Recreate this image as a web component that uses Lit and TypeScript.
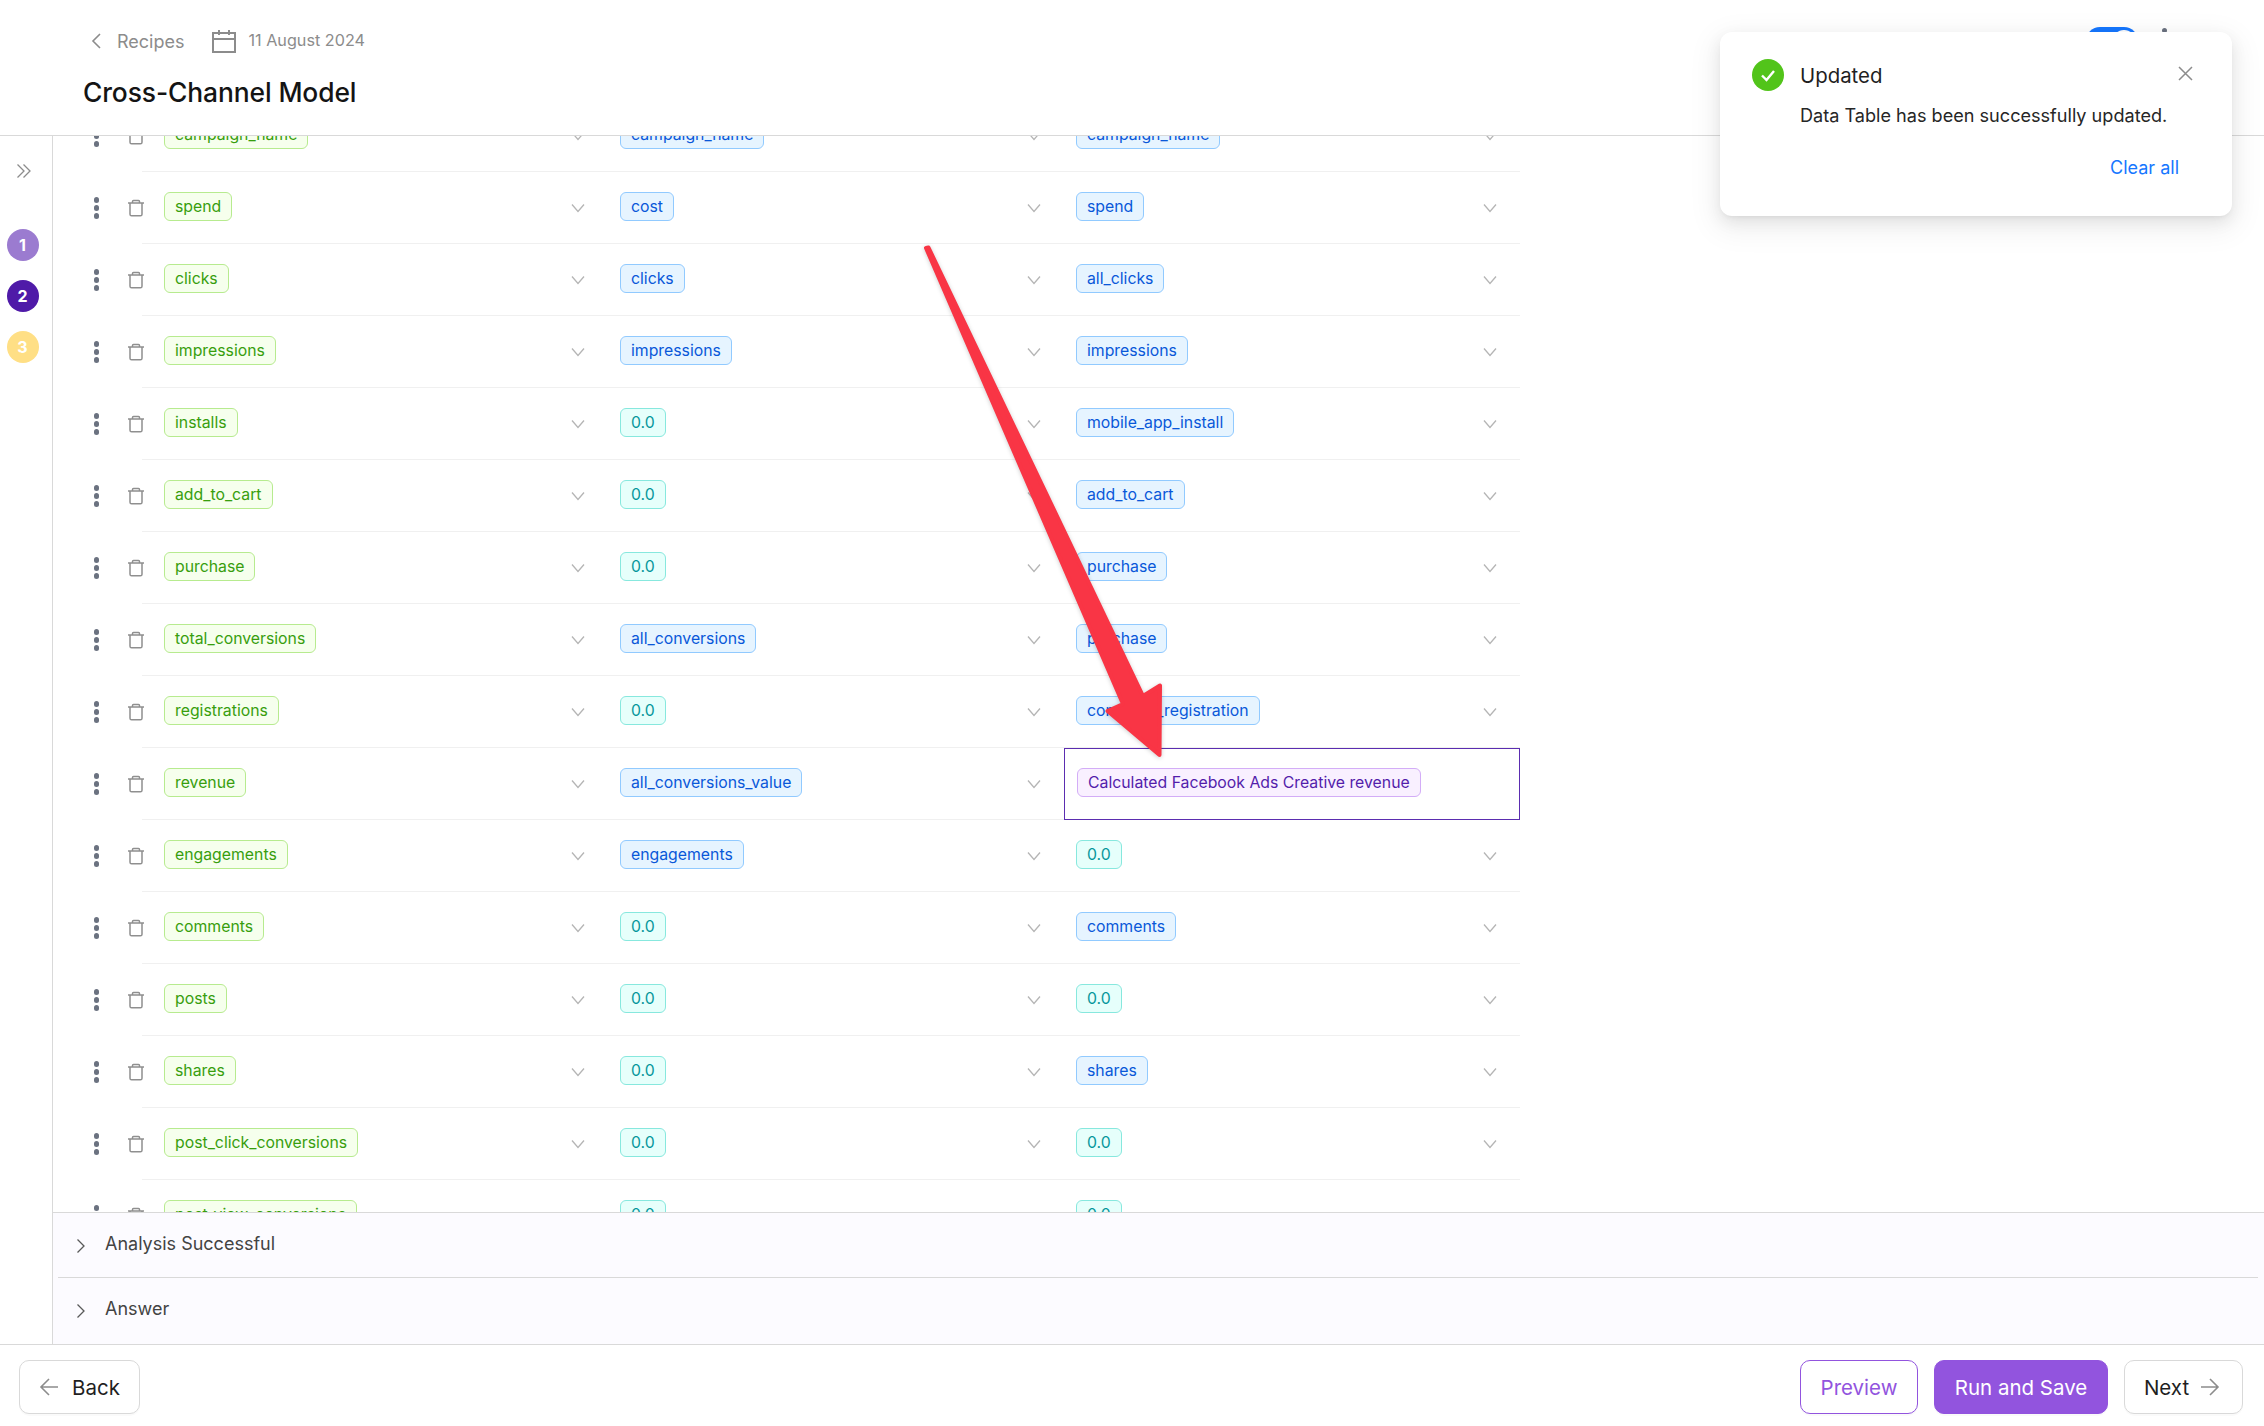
import { LitElement, html, css, svg } from "lit";
import { customElement } from "lit/decorators.js";

type Kind = "g" | "b" | "c" | "p";
const rows: [string, string, string][] = [
  ["campaign_name", "campaign_name", "campaign_name"],
  ["spend", "cost", "spend"],
  ["clicks", "clicks", "all_clicks"],
  ["impressions", "impressions", "impressions"],
  ["installs", "0.0", "mobile_app_install"],
  ["add_to_cart", "0.0", "add_to_cart"],
  ["purchase", "0.0", "purchase"],
  ["total_conversions", "all_conversions", "purchase"],
  ["registrations", "0.0", "complete_registration"],
  ["revenue", "all_conversions_value", "Calculated Facebook Ads Creative revenue"],
  ["engagements", "engagements", "0.0"],
  ["comments", "0.0", "comments"],
  ["posts", "0.0", "0.0"],
  ["shares", "0.0", "shares"],
  ["post_click_conversions", "0.0", "0.0"],
  ["post_view_conversions", "0.0", "0.0"],
];

const chevronDown = svg`<path d="M1 1.5l6 7 6-7" fill="none" stroke="#b5b5b5" stroke-width="1.3"/>`;
const trash = svg`<path d="M1 4h16M5.500 4V2.400c0-.6.4-1 1-1h5c.6 0 1 .4 1 1V4M3 4v11.200c0 1 .6 1.600 1.600 1.600h8.800c1 0 1.600-.6 1.600-1.600V4" fill="none" stroke="#8f8f8f" stroke-width="1.500"/>`;

@customElement("app-root")
export class AppRoot extends LitElement {
  static styles = css`
    :host { display: block; height: 1426px; width: 2264px; position: relative; overflow: hidden; background: #fff;
      font-family: Inter, "Liberation Sans", sans-serif; color: #1f1f1f; }
    .page { display: flex; flex-direction: column; height: 100%; }
    header { height: 136px; flex: none; border-bottom: 1px solid #d9d9d9; padding: 27px 0 0 83px; box-sizing: border-box; position: relative; }
    .crumbs { display: flex; align-items: center; height: 28px; color: #8c8c8c; }
    .crumbs .back { margin-left: 7px; margin-right: 15px; }
    .recipes { font-size: 18px; margin-top: 1px; }
    .cal { margin-left: 28px; margin-right: 12px; margin-top: -1px; }
    .date { font-size: 16.2px; margin-top: -3px; }
    h1 { margin: 17px 0 0; font-size: 26.4px; font-weight: 500; line-height: 40px; color: #141414; letter-spacing: -0.1px; }
    .toggle { position: absolute; left: 2086px; top: 27px; width: 52px; height: 28px; border-radius: 14px; background: #1677ff; }
    .toggle i { position: absolute; right: 3px; top: 3px; width: 22px; height: 22px; border-radius: 50%; background: #fff; }
    .kebab { position: absolute; left: 2162px; top: 28px; width: 5px; height: 5px; border-radius: 50%; background: #6b7280; }
    .main { flex: 1; display: flex; min-height: 0; }
    aside { width: 52px; flex: none; border-right: 1.5px solid #d9d9d9; box-sizing: content-box; display: flex; flex-direction: column; align-items: center; }
    .expand { margin-top: 27px; margin-left: -5px; height: 16px; }
    .steps { margin-top: 50px; margin-left: -7px; display: flex; flex-direction: column; gap: 19px; }
    .step { width: 32px; height: 32px; border-radius: 50%; color: #fff; font-size: 16px; font-weight: 700; display: flex; align-items: center; justify-content: center; }
    .content { flex: 1; min-width: 0; display: flex; flex-direction: column; }
    .scroller { flex: 1; min-height: 0; overflow: hidden; }
    .list { margin-top: -36px; }
    .row { display: flex; height: 72px; }
    .tools { width: 89px; flex: none; display: flex; align-items: center; padding-left: 41px; box-sizing: border-box; }
    .dots { display: flex; flex-direction: column; gap: 2.6px; width: 6px; flex: none; }
    .dots i { width: 5.4px; height: 5.4px; border-radius: 50%; background: #6b7280; }
    .tools svg { margin-left: 27px; flex: none; }
    .cells { display: flex; width: 1378px; padding-left: 10px; box-sizing: border-box; border-bottom: 1px solid #f0f0f0; }
    .cell { width: 456px; flex: none; height: 71px; box-sizing: border-box; padding: 20px 0 0 12px; position: relative; }
    .cell.sel { height: 72px; outline: 1.4px solid #5b2db0; outline-offset: -1px; padding-left: 13px; }
    .cell > svg { position: absolute; left: 419px; top: 31px; }
    .tag { display: inline-block; height: 29px; line-height: 27px; box-sizing: border-box; border: 1px solid; border-radius: 6px; padding: 0 10px; font-size: 15.8px; white-space: nowrap; }
    .tag.g { background: #f6ffed; border-color: #b7eb8f; color: #389e0d; }
    .tag.b { background: #e6f4ff; border-color: #91caff; color: #0958d9; }
    .tag.c { background: #e6fffb; border-color: #87e8de; color: #08979c; }
    .tag.p { background: #f9f0ff; border-color: #d3adf7; color: #531dab; }
    .panels { flex: none; background: #fcfbff; border-top: 1px solid #d9d9d9; height: 131px; }
    .panel { height: 64px; display: flex; align-items: center; padding-left: 18px; color: #434343; font-size: 18px; margin-left: 5px; margin-right: 6px; box-sizing: content-box; }
    .panel svg { margin-right: 24px; margin-top: 2px; }
    .panel + .panel { border-top: 1px solid #d9d9d9; }
    .panel span { margin-top: -4px; margin-left: -5px; }
    footer { height: 82px; flex: none; border-top: 1.5px solid #d9d9d9; box-sizing: border-box; display: flex; align-items: center; justify-content: space-between; padding: 3px 21px 0 19px; }
    .group { display: flex; gap: 16px; }
    .btn { height: 54px; box-sizing: border-box; border: 1.5px solid #d9d9d9; border-radius: 10px; display: flex; align-items: center; justify-content: center; font-size: 20.5px; background: #fff; color: #1f1f1f; box-shadow: 0 2px 0 rgba(0,0,0,.02); }
    .btn.back { width: 121px; gap: 13px; }
    .btn.next { width: 119px; gap: 11px; padding-right: 3px; }
    .btn.preview { width: 118px; border-color: #9254de; color: #9254de; }
    .btn.run { width: 174px; background: #9254de; border-color: #9254de; color: #fff; }
    .toast { position: absolute; left: 1720px; top: 32px; width: 512px; height: 184px; background: #fff; border-radius: 12px; box-shadow: 0 6px 16px rgba(0,0,0,.08), 0 3px 6px -4px rgba(0,0,0,.12), 0 9px 28px 8px rgba(0,0,0,.05); padding: 26px 32px 0 32px; box-sizing: border-box; }
    .thead { display: flex; align-items: center; height: 34px; }
    .ok { margin-right: 16px; flex: none; }
    .title { font-size: 20.4px; margin-top: 1px; }
    .x { margin-left: auto; margin-right: 7px; margin-top: -3px; }
    .msg { margin: 10px 0 0 48px; font-size: 18.1px; line-height: 26px; color: #262626; }
    .clear { text-align: right; margin: 27px 21px 0 0; font-size: 18px; line-height: 26px; color: #1677ff; }
    .arrow { position: absolute; left: 0; top: 0; pointer-events: none; filter: drop-shadow(0 1px 2px rgba(0,0,0,.2)); }
  `;

  private tag(t: string, col: number, row: number) {
    let k: Kind = col === 0 ? "g" : "b";
    if (t === "0.0") k = "c";
    if (t.startsWith("Calculated")) k = "p";
    return html`<span class="tag ${k}">${t}</span>`;
  }

  render() {
    return html`
      <div class="page">
        <header>
          <div class="crumbs">
            <svg class="back" width="12" height="18" viewBox="0 0 12 18"><path d="M10 2L3 9l7 7" fill="none" stroke="#8c8c8c" stroke-width="1.6"/></svg>
            <span class="recipes">Recipes</span>
            <svg class="cal" width="24" height="25" viewBox="0 0 24 25"><path d="M1 5h22v19H1zM1 11h22M7 2v5M17 2v5" fill="none" stroke="#8c8c8c" stroke-width="2"/></svg>
            <span class="date">11 August 2024</span>
          </div>
          <h1>Cross-Channel Model</h1>
          <div class="toggle"><i></i></div>
          <div class="kebab"></div>
        </header>
        <div class="main">
          <aside>
            <svg class="expand" width="16" height="16" viewBox="0 0 16 16"><path d="M1.5 1.5L8 8l-6.5 6.5M7.5 1.5L14 8l-6.5 6.5" fill="none" stroke="#8c8c8c" stroke-width="1.3"/></svg>
            <div class="steps">
              <div class="step" style="background:#9b7bd0">1</div>
              <div class="step" style="background:#4f1aa8">2</div>
              <div class="step" style="background:#ffdf85">3</div>
            </div>
          </aside>
          <div class="content">
            <div class="scroller">
              <div class="list">
                ${rows.map((r, i) => html`
                  <div class="row">
                    <div class="tools">
                      <div class="dots"><i></i><i></i><i></i></div>
                      <svg width="18" height="18" viewBox="0 0 18 18">${trash}</svg>
                    </div>
                    <div class="cells">
                      ${r.map((t, c) => {
                        const sel = i === 9 && c === 2;
                        return html`<div class="cell ${sel ? "sel" : ""}">
                          ${this.tag(t, c, i)}
                          ${sel ? "" : html`<svg width="14" height="10" viewBox="0 0 14 10">${chevronDown}</svg>`}
                        </div>`;
                      })}
                    </div>
                  </div>`)}
              </div>
            </div>
            <div class="panels">
              ${["Analysis Successful", "Answer"].map((t) => html`
                <div class="panel">
                  <svg width="10" height="16" viewBox="0 0 10 16"><path d="M1.5 1.5L8 8l-6.5 6.5" fill="none" stroke="#595959" stroke-width="1.3"/></svg>
                  <span>${t}</span>
                </div>`)}
            </div>
          </div>
        </div>
        <footer>
          <div class="group">
            <div class="btn back">
              <svg width="20" height="20" viewBox="0 0 20 20"><path d="M19 10H2M10 2l-8 8 8 8" fill="none" stroke="#8c8c8c" stroke-width="1.6"/></svg>
              <span>Back</span>
            </div>
          </div>
          <div class="group">
            <div class="btn preview">Preview</div>
            <div class="btn run">Run and Save</div>
            <div class="btn next">
              <span>Next</span>
              <svg width="20" height="20" viewBox="0 0 20 20"><path d="M1 10h17M10 2l8 8-8 8" fill="none" stroke="#8c8c8c" stroke-width="1.6"/></svg>
            </div>
          </div>
        </footer>
      </div>
      <svg class="arrow" width="2264" height="1426" viewBox="0 0 2264 1426">
        <path d="M926 248L928.500 247.500L1143 696L1160 685.500L1159.500 755L1107.500 711L1123 704Z" fill="#f93545" stroke="#f93545" stroke-width="4" stroke-linejoin="round"/>
      </svg>
      <div class="toast">
        <div class="thead">
          <svg class="ok" width="32" height="32" viewBox="0 0 32 32"><circle cx="16" cy="16" r="16" fill="#52c41a"/><path d="M10 16.500l4.500 4.500L22 12" fill="none" stroke="#fff" stroke-width="2.400"/></svg>
          <span class="title">Updated</span>
          <svg class="x" width="15" height="15" viewBox="0 0 15 15"><path d="M1 1l13 13M14 1L1 14" fill="none" stroke="#8c8c8c" stroke-width="1.5"/></svg>
        </div>
        <div class="msg">Data Table has been successfully updated.</div>
        <div class="clear">Clear all</div>
      </div>
    `;
  }
}
